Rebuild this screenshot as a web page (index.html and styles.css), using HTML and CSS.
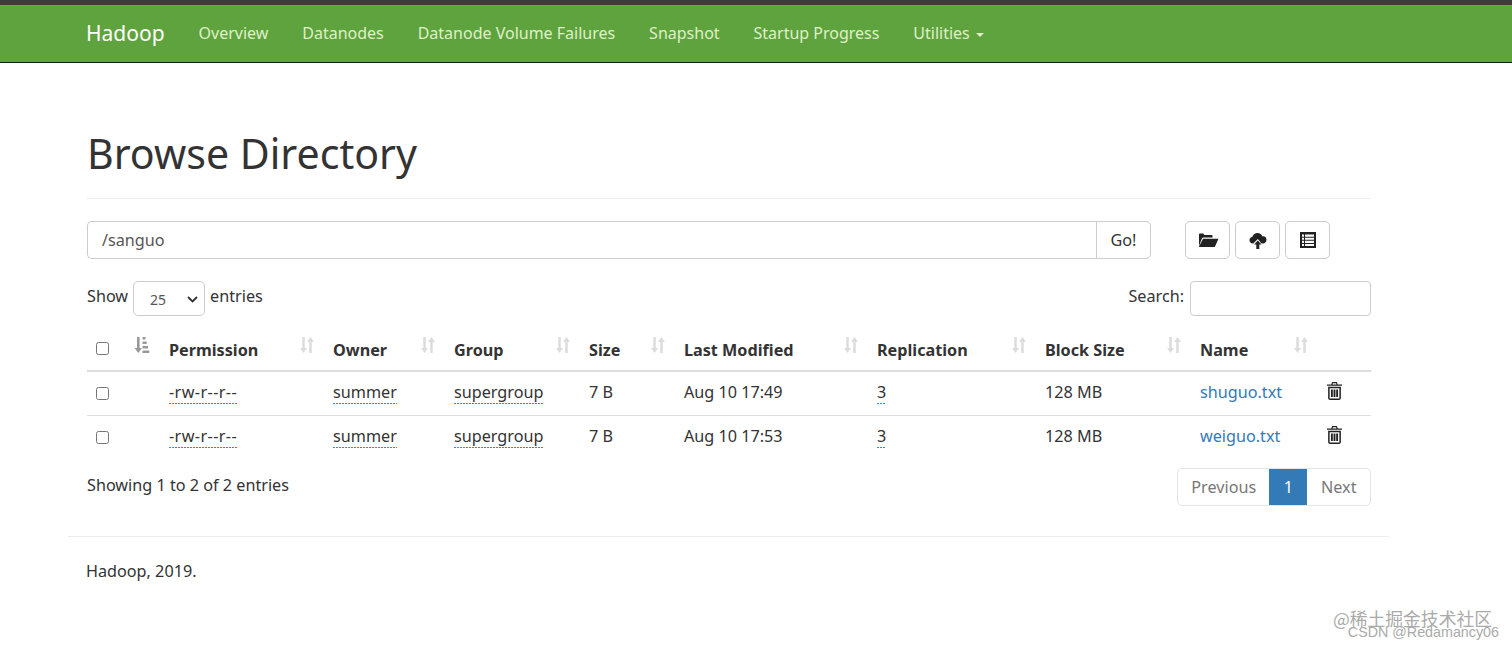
FILE: index.html
```html
<!DOCTYPE html>
<html>

<head>
  <title>Browse Directory</title>
  <link rel="stylesheet" href="styles.css">
</head>

<body>
  <nav class="navbar">
    <a class="brand" href="#">Hadoop</a>
    <a class="nav-link" href="#">Overview</a>
    <a class="nav-link" href="#">Datanodes</a>
    <a class="nav-link" href="#">Datanode Volume Failures</a>
    <a class="nav-link" href="#">Snapshot</a>
    <a class="nav-link" href="#">Startup Progress</a>
    <a class="nav-link" href="#">Utilities <span class="caret"></span></a>
  </nav>

  <div class="container">
    <h1 class="page-title">Browse Directory</h1>

    <div class="toolbar">
      <div class="path-group">
        <input class="path-input" type="text" value="/sanguo">
        <button class="go-btn" type="button">Go!</button>
      </div>
      <div class="icon-btns">
        <button class="icon-btn" type="button">
          <svg width="22" height="18" viewBox="0 0 22 18"><path fill="#222" d="M2 15V3.600C2 3 2.500 2.500 3 2.500h3.200l1.300 1.500h7c.6 0 1 .4 1 1V6.600H6.500c-.8 0-1.300.4-1.600 1L2 15zM6 7.800h15.500L17.800 16H1.800L6 7.800z"/></svg>
        </button>
        <button class="icon-btn" type="button">
          <svg width="20" height="20" viewBox="0 0 20 20"><path fill="#222" d="M5 13.500C2.800 13.500 1.500 12 1.500 10.300c0-1.700 1.200-3 2.800-3.200C4.800 4.700 7 3 9.500 3c2.300 0 4.200 1.400 4.900 3.400.3-.1.600-.1.900-.1 2 0 3.200 1.600 3.200 3.500 0 2-1.500 3.700-3.500 3.700h-1.500L9.800 9 5.300 13.500z"/><path fill="#222" d="M9.800 10.500l3.700 3.900h-2.200V19H8.300v-4.600H6.100z"/></svg>
        </button>
        <button class="icon-btn" type="button">
          <svg width="16" height="16" viewBox="0 0 16 16"><path fill="#222" fill-rule="evenodd" d="M0 0h16v16H0zM2 2.500v2.200h2V2.500zm3 0v2.200h9V2.500zm-3 3.200v2.100h2V5.700zm3 0v2.100h9V5.700zm-3 3.100v2.100h2V8.800zm3 0v2.100h9V8.800zm-3 3.100V14h2v-2.100zm3 0V14h9v-2.100z"/></svg>
        </button>
      </div>
    </div>

    <div class="table-controls">
      <label class="length-label">Show
        <span class="select-box">25
          <svg width="11" height="7" viewBox="0 0 11 7"><path d="M1 1l4.500 4.500L10 1" fill="none" stroke="#333" stroke-width="1.800"/></svg>
        </span>
        entries</label>
      <label class="search-label">Search: <input class="search-input" type="text"></label>
    </div>

    <table class="file-table">
      <thead>
        <tr>
          <th class="col-check"><span class="check"></span></th>
          <th class="col-sort">
            <svg class="sort-icon active" width="18" height="18" viewBox="0 0 18 18"><path d="M5 1h2.600v11H10l-3.700 5-3.700-5H5z"/><path d="M10.500 1h3v2.500h-3zM10.500 5.500h4.200V8h-4.200zM10.500 10h5.500v2.500h-5.500zM10.500 14.500h6.800V17h-6.800z"/></svg>
          </th>
          <th class="col-perm">Permission<svg class="sort-icon" width="16" height="18" viewBox="0 0 16 18"><path d="M3.300 1h2.500v11H8l-3.500 5L1 12h2.300zM10.200 17h2.500V6H15l-3.500-5L8 6h2.200z"/></svg></th>
          <th class="col-owner">Owner<svg class="sort-icon" width="16" height="18" viewBox="0 0 16 18"><path d="M3.300 1h2.500v11H8l-3.500 5L1 12h2.300zM10.200 17h2.500V6H15l-3.500-5L8 6h2.200z"/></svg></th>
          <th class="col-group">Group<svg class="sort-icon" width="16" height="18" viewBox="0 0 16 18"><path d="M3.300 1h2.500v11H8l-3.500 5L1 12h2.300zM10.200 17h2.500V6H15l-3.500-5L8 6h2.200z"/></svg></th>
          <th class="col-size">Size<svg class="sort-icon" width="16" height="18" viewBox="0 0 16 18"><path d="M3.300 1h2.500v11H8l-3.500 5L1 12h2.300zM10.200 17h2.500V6H15l-3.500-5L8 6h2.200z"/></svg></th>
          <th class="col-modified">Last Modified<svg class="sort-icon" width="16" height="18" viewBox="0 0 16 18"><path d="M3.300 1h2.500v11H8l-3.500 5L1 12h2.300zM10.200 17h2.500V6H15l-3.500-5L8 6h2.200z"/></svg></th>
          <th class="col-repl">Replication<svg class="sort-icon" width="16" height="18" viewBox="0 0 16 18"><path d="M3.300 1h2.500v11H8l-3.500 5L1 12h2.300zM10.200 17h2.500V6H15l-3.500-5L8 6h2.200z"/></svg></th>
          <th class="col-block">Block Size<svg class="sort-icon" width="16" height="18" viewBox="0 0 16 18"><path d="M3.300 1h2.500v11H8l-3.500 5L1 12h2.300zM10.200 17h2.500V6H15l-3.500-5L8 6h2.200z"/></svg></th>
          <th class="col-name">Name<svg class="sort-icon" width="16" height="18" viewBox="0 0 16 18"><path d="M3.300 1h2.500v11H8l-3.500 5L1 12h2.300zM10.200 17h2.500V6H15l-3.500-5L8 6h2.200z"/></svg></th>
          <th class="col-del"></th>
        </tr>
      </thead>
      <tbody>
        <tr>
          <td><span class="check"></span></td>
          <td></td>
          <td><span class="dotted perm">-rw-r--r--</span></td>
          <td><span class="dotted">summer</span></td>
          <td><span class="dotted">supergroup</span></td>
          <td>7 B</td>
          <td>Aug 10 17:49</td>
          <td><span class="dotted">3</span></td>
          <td>128 MB</td>
          <td><a href="#">shuguo.txt</a></td>
          <td><svg class="trash" width="15" height="18" viewBox="0 0 16 19"><path fill="#222" fill-rule="evenodd" d="M5.500 0h5l1 2.500H16V4H0V2.500h4.500zM6.300 1.200l-.4 1.300h4.200l-.4-1.300zM1.200 5h13.600v12c0 1.200-.8 2-2 2H3.200c-1.200 0-2-.8-2-2zM2.800 6.500V17c0 .4.200.6.500.6h9.400c.3 0 .5-.2.500-.6V6.500zM4.200 8h2v8h-2zM7 8h2v8H7zM9.800 8h2v8h-2z"/></svg></td>
        </tr>
        <tr>
          <td><span class="check"></span></td>
          <td></td>
          <td><span class="dotted perm">-rw-r--r--</span></td>
          <td><span class="dotted">summer</span></td>
          <td><span class="dotted">supergroup</span></td>
          <td>7 B</td>
          <td>Aug 10 17:53</td>
          <td><span class="dotted">3</span></td>
          <td>128 MB</td>
          <td><a href="#">weiguo.txt</a></td>
          <td><svg class="trash" width="15" height="18" viewBox="0 0 16 19"><path fill="#222" fill-rule="evenodd" d="M5.500 0h5l1 2.500H16V4H0V2.500h4.500zM6.300 1.200l-.4 1.300h4.200l-.4-1.300zM1.200 5h13.600v12c0 1.200-.8 2-2 2H3.200c-1.200 0-2-.8-2-2zM2.800 6.500V17c0 .4.200.6.500.6h9.400c.3 0 .5-.2.500-.6V6.500zM4.200 8h2v8h-2zM7 8h2v8H7zM9.800 8h2v8h-2z"/></svg></td>
        </tr>
      </tbody>
    </table>

    <div class="table-footer">
      <div class="info">Showing 1 to 2 of 2 entries</div>
      <div class="pagination">
        <a class="page" href="#">Previous</a>
        <a class="page current" href="#">1</a>
        <a class="page next" href="#">Next</a>
      </div>
    </div>
  </div>

  <footer class="footer">Hadoop, 2019.</footer>

  <div class="watermark">
    <div class="wm-top">@稀土掘金技术社区</div>
    <div class="wm-bottom">CSDN @Redamancy06</div>
  </div>
</body>

</html>
```

FILE: styles.css
```css
* {
  box-sizing: border-box;
}

body {
  margin: 0;
  font-family: "Noto Sans", Arial, sans-serif;
  font-size: 16.200px;
  color: #333;
  background-color: #fff;
  height: 649px;
  overflow: hidden;
  position: relative;
}

a {
  color: #337ab7;
  text-decoration: none;
}

.navbar {
  height: 63px;
  display: flex;
  align-items: center;
  padding: 0 0 1px 86px;
  background-color: #5fa33e;
  border-top: 5px solid #3c3c3c;
  border-bottom: 1px solid #10200a;
  box-shadow: inset 0 1px 0 #8a8a8a;
}

.brand {
  color: #fff;
  font-size: 21px;
  margin-right: 34px;
}

.nav-link {
  color: #dff0c8;
  font-size: 16px;
  margin-right: 33.900px;
}

.caret {
  display: inline-block;
  margin-left: 2px;
  vertical-align: middle;
  border-top: 4px solid #dff0c8;
  border-left: 4px solid transparent;
  border-right: 4px solid transparent;
}

.container {
  width: 1284px;
  margin-left: 87px;
}

.page-title {
  margin: 61px 0 0;
  padding-bottom: 16px;
  font-size: 41.100px;
  font-weight: 400;
  line-height: 58px;
  color: #333;
  border-bottom: 1px solid #eee;
}

.toolbar {
  display: flex;
  margin-top: 22px;
}

.path-group {
  display: flex;
  width: 1064px;
  height: 38px;
}

.path-input {
  flex: 1;
  padding: 0 14px;
  font: inherit;
  color: #555;
  border: 1px solid #ccc;
  border-right: 0;
  border-radius: 5px 0 0 5px;
}

.go-btn {
  width: 55px;
  font: inherit;
  color: #333;
  background: #fff;
  border: 1px solid #ccc;
  border-radius: 0 5px 5px 0;
}

.icon-btns {
  display: flex;
  gap: 5px;
  margin-left: 34px;
}

.icon-btn {
  display: flex;
  align-items: center;
  justify-content: center;
  width: 45px;
  height: 38px;
  padding: 0;
  background: #fff;
  border: 1px solid #ccc;
  border-radius: 5px;
}

.table-controls {
  display: flex;
  justify-content: space-between;
  align-items: center;
  height: 36px;
  margin-top: 21px;
}

.length-label {
  display: flex;
  align-items: center;
  gap: 5px;
  padding-bottom: 5px;
}

.select-box {
  display: flex;
  align-items: center;
  justify-content: space-between;
  width: 72px;
  height: 35px;
  margin-bottom: -5px;
  padding: 3px 6px 0 16px;
  font-size: 14px;
  color: #555;
  border: 1px solid #ccc;
  border-radius: 5px;
}

.search-label {
  display: flex;
  align-items: center;
  gap: 6px;
  padding-bottom: 5px;
}

.search-input {
  width: 181px;
  height: 35px;
  margin-bottom: -5px;
  border: 1px solid #ccc;
  border-radius: 4px;
}

.file-table {
  width: 100%;
  margin-top: 12px;
  border-collapse: collapse;
  table-layout: fixed;
}

.file-table th {
  position: relative;
  height: 43px;
  padding: 2px 8px 0;
  text-align: left;
  font-weight: 700;
  border-bottom: 2px solid #ddd;
}

.file-table th .check {
  margin-top: -4px;
}

.file-table td {
  height: 44px;
  padding: 0 8px 3px;
  border-bottom: 1px solid #ddd;
}

.file-table td .check {
  margin-top: 3px;
}

.file-table tbody tr:last-child td {
  border-bottom: 0;
}

.col-check { width: 40px; }
.col-sort { width: 34px; }
.col-perm { width: 164px; }
.col-owner { width: 121px; }
.col-group { width: 135px; }
.col-size { width: 95px; }
.col-modified { width: 193px; }
.col-repl { width: 168px; }
.col-block { width: 155px; }
.col-name { width: 127px; }

.check {
  display: block;
  width: 13px;
  height: 13px;
  margin-left: 1px;
  background: #fff;
  border: 1px solid #767676;
  border-radius: 2.500px;
}

.sort-icon {
  position: absolute;
  right: 10px;
  top: 8px;
  fill: #dcdcdc;
}

.sort-icon.active {
  right: auto;
  left: 5px;
  fill: #999;
}

.dotted {
  padding-bottom: 1px;
  background: repeating-linear-gradient(to right, #2b8fd6 0, #2b8fd6 2px, transparent 2px, transparent 3px) left bottom / 100% 1px no-repeat;
}

.perm {
  letter-spacing: 0.400px;
}

.trash {
  display: block;
  margin-top: -2px;
}

.table-footer {
  display: flex;
  justify-content: space-between;
  align-items: flex-start;
  margin-top: 9px;
}

.info {
  margin-top: 6px;
}

.pagination {
  display: flex;
  height: 38px;
  border: 1px solid #e4e4e4;
  border-radius: 5px;
}

.page {
  display: flex;
  align-items: center;
  padding: 0 13px;
  color: #777;
}

.page.current {
  padding: 0 14.500px;
  color: #fff;
  background-color: #337ab7;
}

.page.next {
  padding: 0 13.500px;
}

.footer {
  margin: 30px 123px 0 68px;
  padding: 23px 0 0 18px;
  border-top: 1px solid #eee;
}

.watermark {
  position: absolute;
  right: 13px;
  top: 610px;
  text-align: right;
  color: #aaa;
  line-height: 1;
}

.wm-top {
  font-family: "Noto Sans CJK SC", sans-serif;
  font-size: 17.800px;
  margin-right: 7px;
}

.wm-bottom {
  margin-top: -3px;
  font-family: "Liberation Sans", sans-serif;
  font-size: 14.300px;
}
```
